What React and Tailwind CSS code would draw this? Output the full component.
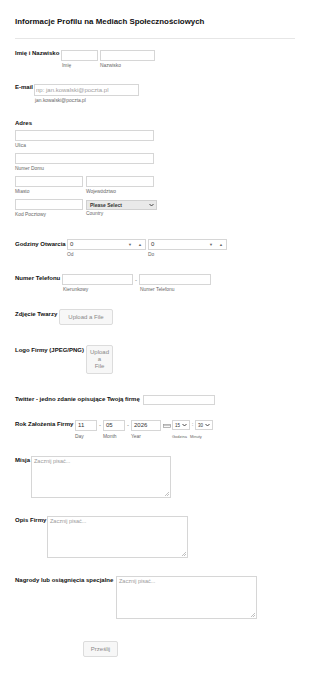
import React from "react";

const lab = "shrink-0 whitespace-nowrap text-[6px] font-bold leading-[7px] text-[#111]";
const sub = "whitespace-nowrap text-[4.9px] leading-[6px] text-[#666]";
const box = "h-[11px] border border-[#d6d6d6] bg-white";

const Field = ({ w, label, className = "" }) => (
  <div className="flex flex-col" style={{ width: w }}>
    <div className={`${box} w-full ${className}`} />
    {label && <span className={`${sub} mt-[2px]`}>{label}</span>}
  </div>
);

const Spinner = ({ label }) => (
  <div className="flex w-[79px] flex-col">
    <div className={`${box} flex w-full items-center justify-between pl-[2px] pr-[3px]`}>
      <span className="text-[6px] leading-[7px] text-[#333]">0</span>
      <span className="flex gap-[6px] text-[4px] leading-[4px] text-[#666]">
        <span>▼</span>
        <span>▲</span>
      </span>
    </div>
    <span className={`${sub} mt-[2px]`}>{label}</span>
  </div>
);

const DateBox = ({ w, value, label }) => (
  <div className="flex flex-col" style={{ width: w }}>
    <div className={`${box} flex w-full items-center px-[2px]`}>
      <span className="text-[6px] leading-[7px] text-[#333]">{value}</span>
    </div>
    <span className={`${sub} mt-[3px]`}>{label}</span>
  </div>
);

const MiniSelect = ({ value }) => (
  <div className="flex h-[10px] w-[18px] items-center justify-between border border-[#d6d6d6] bg-white px-[2px]">
    <span className="text-[4.5px] leading-[5px] text-[#333]">{value}</span>
    <svg width="5" height="4" viewBox="0 0 10 6">
      <path d="M1 1l4 4 4-4" fill="none" stroke="#333" strokeWidth="1.8" />
    </svg>
  </div>
);

const Area = ({ w, h }) => (
  <div className="relative" style={{ width: w, height: h }}>
    <textarea
      readOnly
      placeholder="Zacznij pisać..."
      className="h-full w-full resize-none border border-[#d6d6d6] bg-white px-[2px] py-[1px] text-[5.5px] leading-[7px] text-[#333] outline-none placeholder:text-[#9a9a9a]"
    />
    <svg className="absolute bottom-[2px] right-[2px]" width="4" height="4" viewBox="0 0 4 4">
      <path d="M4 0L0 4M4 2L2 4" stroke="#999" strokeWidth="0.6" />
    </svg>
  </div>
);

export default function App() {
  return (
    <div
      className="min-h-[673px] bg-white px-[15px]"
      style={{ fontFamily: '"Liberation Sans", Arial, sans-serif' }}
    >
      <div className="border-b border-[#e6e6e6] pb-[12px] pt-[17px]">
        <h1 className="text-[7.9px] font-bold leading-[9px] text-[#111]">
          Informacje Profilu na Mediach Społecznościowych
        </h1>
      </div>

      {/* Imię i Nazwisko */}
      <div className="mt-[11px] flex items-start">
        <span className={`${lab} w-[46px]`}>Imię i Nazwisko</span>
        <div className="flex gap-[2px]">
          <Field w={37} label={<span className="pl-[1px]">Imię</span>} />
          <Field w={55} label="Nazwisko" />
        </div>
      </div>

      {/* E-mail */}
      <div className="mt-[15px] flex items-start">
        <span className={`${lab} w-[19px]`}>E-mail</span>
        <div className="flex flex-col">
          <input
            readOnly
            placeholder="np: jan.kowalski@poczta.pl"
            className="h-[12px] w-[105px] border border-[#d6d6d6] bg-white px-[1px] text-[6px] leading-[7px] outline-none placeholder:text-[#a0a0a0]"
          />
          <span className={`${sub} mt-[2px] pl-[1px] text-[#444]`}>jan.kowalski@poczta.pl</span>
        </div>
      </div>

      {/* Adres */}
      <div className="mt-[16px] flex flex-col">
        <span className={lab}>Adres</span>
        <div className="mt-[3px]">
          <Field w={139} label="Ulica" />
        </div>
        <div className="mt-[4px]">
          <Field w={139} label="Numer Domu" />
        </div>
        <div className="mt-[4px] flex gap-[3px]">
          <Field w={68} label="Miasto" />
          <Field w={68} label="Województwo" />
        </div>
        <div className="mt-[4px] flex gap-[3px]">
          <Field w={68} label="Kod Pocztowy" />
          <div className="flex w-[71px] flex-col">
            <div className="mt-[1px] flex h-[10px] w-full items-center justify-between border border-[#d0d0d0] bg-[#e9e9e9] pl-[3px] pr-[2px]">
              <span className="text-[5px] font-semibold leading-[6px] text-[#333]">Please Select</span>
              <svg width="5" height="4" viewBox="0 0 10 6">
                <path d="M1 1l4 4 4-4" fill="none" stroke="#333" strokeWidth="1.8" />
              </svg>
            </div>
            <span className={`${sub} mt-[1px]`}>Country</span>
          </div>
        </div>
      </div>

      {/* Godziny Otwarcia */}
      <div className="mt-[21px] flex items-start">
        <span className={`${lab} mt-[2px] w-[52px]`}>Godziny Otwarcia</span>
        <div className="flex gap-[2px]">
          <Spinner label="Od" />
          <Spinner label="Do" />
        </div>
      </div>

      {/* Numer Telefonu */}
      <div className="mt-[16px] flex items-start">
        <span className={`${lab} mt-[1px] w-[47px]`}>Numer Telefonu</span>
        <div className="flex">
          <Field w={71} label={<span className="pl-[1px]">Kierunkowy</span>} />
          <span className="w-[6px] pt-[3px] text-center text-[6px] leading-[7px] text-[#666]">-</span>
          <Field w={72} label={<span className="pl-[1px]">Numer Telefonu</span>} />
        </div>
      </div>

      {/* Zdjęcie Twarzy */}
      <div className="mt-[16px] flex items-start">
        <span className={`${lab} mt-[2px] w-[44px]`}>Zdjęcie Twarzy</span>
        <button className="h-[16px] w-[54px] rounded-[2px] border border-[#dcdcdc] bg-[#f7f7f7] text-[6px] leading-[7px] text-[#888]">
          Upload a File
        </button>
      </div>

      {/* Logo Firmy */}
      <div className="mt-[20px] flex items-start">
        <span className={`${lab} mt-[2px] w-[71px]`}>Logo Firmy (JPEG/PNG)</span>
        <button className="flex h-[29px] w-[27px] flex-col items-center justify-center rounded-[2px] border border-[#dcdcdc] bg-[#f7f7f7] text-[6px] leading-[7px] text-[#888]">
          <span>Upload</span>
          <span>a</span>
          <span>File</span>
        </button>
      </div>

      {/* Twitter */}
      <div className="mt-[21px] flex items-start">
        <span className={`${lab} mt-[1px] w-[128px]`}>Twitter - jedno zdanie opisujące Twoją firmę</span>
        <div className="h-[10px] w-[72px] border border-[#d6d6d6] bg-white" />
      </div>

      {/* Rok Założenia Firmy */}
      <div className="mt-[15px] flex items-start">
        <span className={`${lab} mt-[1px] w-[60px]`}>Rok Założenia Firmy</span>
        <div className="flex items-start">
          <DateBox w={22} value="11" label="Day" />
          <span className="w-[6px] pt-[2px] text-center text-[6px] leading-[7px] text-[#666]">-</span>
          <DateBox w={22} value="05" label="Month" />
          <span className="w-[6px] pt-[2px] text-center text-[6px] leading-[7px] text-[#666]">-</span>
          <DateBox w={30} value="2026" label="Year" />
          <div className="flex w-[11px] justify-center pt-[4px]">
            <svg width="8" height="4" viewBox="0 0 8 4">
              <rect x="0.5" y="0.5" width="7" height="3" fill="none" stroke="#999" strokeWidth="0.7" />
              <line x1="0.5" y1="1.6" x2="7.5" y2="1.6" stroke="#999" strokeWidth="0.6" />
            </svg>
          </div>
          <div className="flex flex-col">
            <MiniSelect value="15" />
            <span className={`${sub} mt-[4px] text-[4px]`}>Godzina</span>
          </div>
          <span className="w-[5px] pt-[1px] text-center text-[6px] leading-[7px] text-[#666]">:</span>
          <div className="flex flex-col">
            <MiniSelect value="30" />
            <span className={`${sub} -ml-[5px] mt-[4px] text-[4px]`}>Minuty</span>
          </div>
        </div>
      </div>

      {/* Misja */}
      <div className="mt-[16px] flex items-start">
        <span className={`${lab} mt-[1px] w-[16px]`}>Misja</span>
        <Area w={140} h={42} />
      </div>

      {/* Opis Firmy */}
      <div className="mt-[18px] flex items-start">
        <span className={`${lab} mt-[1px] w-[32px]`}>Opis Firmy</span>
        <Area w={141} h={42} />
      </div>

      {/* Nagrody */}
      <div className="mt-[18px] flex items-start">
        <span className={`${lab} mt-[1px] w-[101px]`}>Nagrody lub osiągnięcia specjalne</span>
        <Area w={141} h={43} />
      </div>

      <div className="mt-[22px] flex pl-[68px]">
        <button className="h-[16px] w-[35px] rounded-[2px] border border-[#dcdcdc] bg-[#f7f7f7] text-[6px] leading-[7px] text-[#888]">
          Prześlij
        </button>
      </div>
    </div>
  );
}
